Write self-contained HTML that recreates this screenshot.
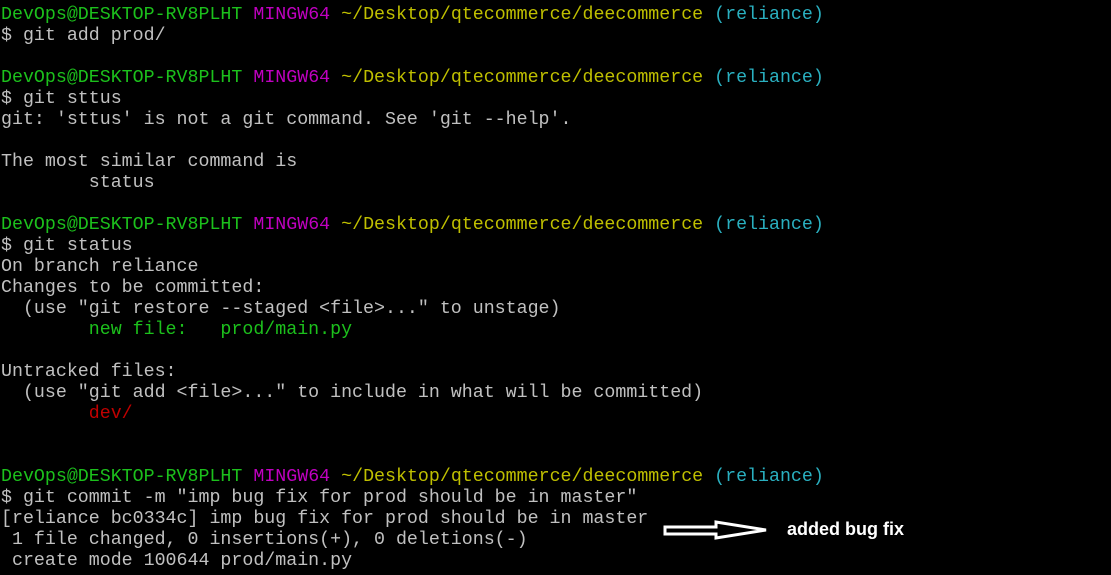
<!DOCTYPE html>
<html><head><meta charset="utf-8"><style>
html,body{margin:0;padding:0;background:#000;width:1111px;height:575px;overflow:hidden}
pre{margin:0;padding:5px 0 0 1px;font-family:"Liberation Mono",monospace;font-size:18.3px;line-height:21px;color:#c0c0c0;white-space:pre}
.g{color:#1cc01c}.m{color:#c000c0}.y{color:#bfbf00}.c{color:#2ab0c0}.r{color:#c00000}
.note{position:absolute;left:787px;top:519px;font-family:"Liberation Sans",sans-serif;font-weight:bold;font-size:18px;color:#fff}
</style></head><body>
<pre><span class="g">DevOps@DESKTOP-RV8PLHT</span> <span class="m">MINGW64</span> <span class="y">~/Desktop/qtecommerce/deecommerce</span> <span class="c">(reliance)</span>
$ git add prod/

<span class="g">DevOps@DESKTOP-RV8PLHT</span> <span class="m">MINGW64</span> <span class="y">~/Desktop/qtecommerce/deecommerce</span> <span class="c">(reliance)</span>
$ git sttus
git: 'sttus' is not a git command. See 'git --help'.

The most similar command is
        status

<span class="g">DevOps@DESKTOP-RV8PLHT</span> <span class="m">MINGW64</span> <span class="y">~/Desktop/qtecommerce/deecommerce</span> <span class="c">(reliance)</span>
$ git status
On branch reliance
Changes to be committed:
  (use "git restore --staged &lt;file&gt;..." to unstage)
        <span class="g">new file:   prod/main.py</span>

Untracked files:
  (use "git add &lt;file&gt;..." to include in what will be committed)
        <span class="r">dev/</span>


<span class="g">DevOps@DESKTOP-RV8PLHT</span> <span class="m">MINGW64</span> <span class="y">~/Desktop/qtecommerce/deecommerce</span> <span class="c">(reliance)</span>
$ git commit -m "imp bug fix for prod should be in master"
[reliance bc0334c] imp bug fix for prod should be in master
 1 file changed, 0 insertions(+), 0 deletions(-)
 create mode 100644 prod/main.py</pre>
<svg style="position:absolute;left:660px;top:518px" width="112" height="26"><path d="M5 9 H56 V4 L106 12 L56 20 V16 H5 Z" fill="none" stroke="#fff" stroke-width="3" stroke-linejoin="miter"/></svg>
<div class="note">added bug fix</div>
</body></html>
